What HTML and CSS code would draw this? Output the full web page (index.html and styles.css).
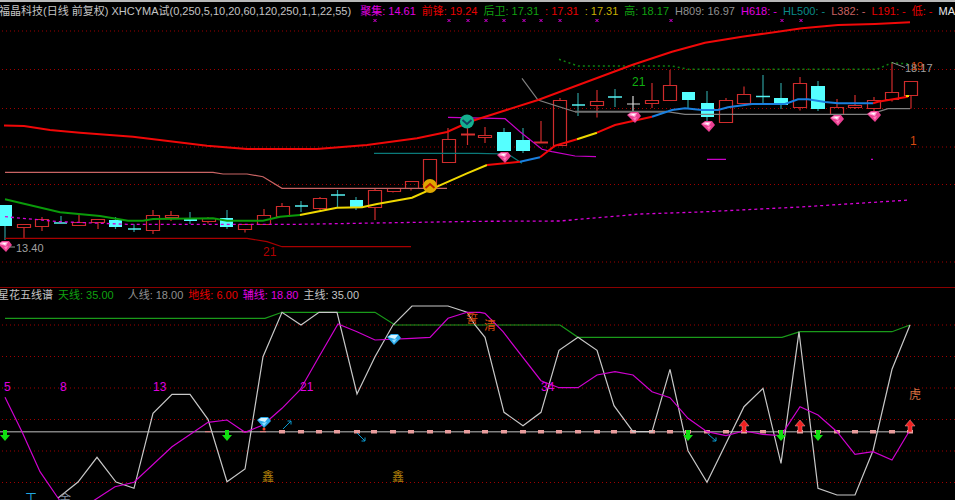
FILE: index.html
```html
<!DOCTYPE html>
<html>
  <head>
    <meta charset="utf-8" />
    <title>福晶科技 日线</title>
    <link rel="stylesheet" href="styles.css">
  </head>

  <body>
    <div class="top-edge"></div>

    <!-- 主图 -->
    <div class="legend legend-main">
      <span class="c-gray title-main">福晶科技(日线 前复权) XHCYMA试(0,250,5,10,20,60,120,250,1,1,22,55)</span>
      <span class="c-magenta">聚集: 14.61</span>
      <span class="c-red">前锋: 19.24</span>
      <span class="c-green">后卫: 17.31</span>
      <span class="c-red">: 17.31</span>
      <span class="c-yellow">: 17.31</span>
      <span class="c-green">高: 18.17</span>
      <span class="c-dim">H809: 16.97</span>
      <span class="c-magenta">H618: -</span>
      <span class="c-teal">HL500: -</span>
      <span class="c-salmon">L382: -</span>
      <span class="c-red">L191: -</span>
      <span class="c-red">低: -</span>
      <span class="c-white ma-tag">MA</span>
    </div>

    <svg class="chart chart-main" viewBox="0 19 955 268" width="955" height="268">
      <defs>
        <g id="gem-pink">
          <path fill="#ea3f92" d="M-7-2-3-5 4-5 7-1 1 6z"/>
          <path fill="#ffa6d4" d="M-6-2-3-4 3-4 1 0z"/>
          <path fill="#fff" d="M-3-3 1-3 0-1z"/>
          <path fill="#ff7ab8" d="M-1 1 3 0 1 4z"/>
        </g>
      </defs>

      <path class="grid" d="M2 31H955M2 69.5H955M2 108.5H955M2 147H955M2 184.5H955M2 262H955"/>

      <!-- 阳线 -->
      <path class="candle-red" d="M17.5 224.5h13v3h-13zM24 227.5v10.5
        M35.5 219.5h13v7h-13zM42 217v2.5M42 226.5v4.5
        M72.5 222.5h13v3h-13zM79 215v7.5
        M91.5 219.5h13v3h-13zM98 222.5v6.5
        M146.5 215.5h13v15h-13zM153 210v5.5M153 230.5v3.5
        M165.5 215.5h13v2h-13zM171 211v4.5M171 217.5v3.5
        M202.5 218.5h13v3h-13zM208 217v2M208 221.5v2
        M238.5 224.5h13v5h-13zM245 229.5v3
        M257.5 215.5h13v9h-13zM264 209v6.5
        M276.5 206.5h13v10h-13zM282 203v3.5
        M313.5 198.5h13v10h-13zM320 197v1.5M320 208.5v1.5
        M368.5 190.5h13v17h-13zM375 189v1.5M375 207.5v12.5
        M387.5 188.5h13v3h-13zM393 191.5v1
        M405.5 181.5h13v7h-13zM411 188.5v2
        M423.5 159.5h13v29h-13z
        M442.5 139.5h13v23h-13zM448 128v11.5
        M467.5 125v20
        M478.5 135.5h13v2h-13zM485 127v8.5M485 137.5v5.5
        M541 121v22
        M553.5 100.5h13v45h-13zM560 98v2.5
        M590.5 101.5h13v4h-13zM597 90v11.5M597 105.5v12
        M645.5 100.5h13v3h-13zM652 83v17.5M652 103.5v4.5
        M663.5 85.5h13v15h-13zM670 70v15.5
        M719.5 100.5h13v22h-13zM726 98v2.5
        M737.5 94.5h13v9h-13zM744 86.5v8
        M793.5 83.5h13v24h-13zM800 77v6.5M800 107.5v3
        M830.5 107.5h13v7h-13zM837 99v8.5
        M848.5 105.5h13v2h-13zM855 95v10.5M855 107.5v1.5
        M867.5 100.5h13v8h-13zM874 97v3.5M874 108.5v3.5
        M885.5 92.5h13v7h-13zM892 62v30.5M892 99.5v2
        M904.5 81.5h13v14h-13zM911 95.5v13"/>
      <path class="doji-red" d="M461 134.5h14M534 142.5h14"/>

      <!-- 阴线 -->
      <path class="wick-teal" d="M5 226v14M61 216v7M115.5 217v12M134 224v8M190 212v12M227 210v19
        M301 201v11M337.5 190v17M356 197v13M504 128v23M523 128v25
        M578 93v23M615 89v18M688 99v9M707 91v31M763 75v30M781 83v26M818 81v30"/>
      <path class="body-cyan" d="M0 205h12v21H0zM109 220h13v7h-13zM184 219h13v2h-13zM220 218h13v9h-13z
        M350 200h13v7h-13zM497 132h14v19h-14zM516 140h14v11h-14zM682 92h13v8h-13z
        M701 103h13v14h-13zM774 98h14v7h-14zM811 86h14v23h-14z"/>
      <path class="doji-cyan" d="M54 223h13M128 229h13M295 206h13M331 195h14M572 105h13M608 97h14M756 96.5h14"/>
      <path class="doji-white" d="M633 96v16M627 104h13"/>

      <!-- 均线 -->
      <polyline class="line-thin c-salmon-line" points="5,172.3 213,172.3 223,174 247,174 263,176.7 282,188.3 447,188.3"/>
      <polyline class="line-thin c-darkred-line" points="5,238.3 247,238.3 267,241.7 282,246.7 411,246.7"/>
      <polyline class="line-thin c-teal-line" points="374,153.3 477,153.3 508,154 522,163.3"/>
      <polyline class="line-thin c-purple-line" points="448,117.3 505,118.7 520,131.7 542,149.3 552,151.7 575,156 596,156.7"/>
      <path class="line-thin c-purple-line" d="M707 159.3H726M871 159.3H873"/>
      <polyline class="line-thin c-gray-line" points="522,78.3 538,100 575,111.7"/>
      <polyline class="line-gray-thick" points="575,111.7 667,111.7"/>
      <polyline class="line-thin c-gray-line" points="667,111.7 685,114.3 870,114.3 888,108.7 910,108.7"/>
      <polyline class="line-dash-green" points="559,59.3 578,66 672,66 688,69.3 877,69.3 892,62.7 908,64"/>
      <polyline class="line-dash-magenta" points="5,216.7 60,221.7 127,224.3 300,224.3 420,222.3 480,221.3 560,221 640,214 700,212 800,207 910,200"/>

      <polyline class="line-bold c-red-line" points="4,125.5 24,126 50,130 80,132.7 133,136.7 207,145.7 247,149 317,149 367,145 417,138.3 447,132 467,123 475,120 538,100 632,65 672,51.7 705,42.7 742,36.7 802,28.3 838,25 875,24 910,22.3"/>
      <polyline class="line-bold c-green-line" points="5,199.3 60,212.3 100,216 128,220.7 143,220.7 153,219 213,218.3 227,220.7 263,220.7 280,216.7 300,215"/>
      <polyline class="line-bold c-yellow-line" points="300,215 337,207.7 362,207.3 377,204 412,197.7 437,186.7 467,173.3 487,165"/>
      <polyline class="line-bold c-red-line" points="487,165 520,161.7"/>
      <polyline class="line-bold c-blue-line" points="520,161.7 540,157.3"/>
      <polyline class="line-bold c-red-line" points="540,157.3 555,145.7 577,139.3"/>
      <polyline class="line-bold c-yellow-line" points="577,139.3 597,132.7"/>
      <polyline class="line-bold c-red-line" points="597,132.7 615,125 652,116.7"/>
      <polyline class="line-bold c-blue-line" points="652,116.7 672,110 685,108.3 702,110 718,110 728,107.3 752,104 785,104 798,99.3 808,99.3 825,102 838,103.3 873,103.3"/>
      <polyline class="line-bold c-red-line" points="873,103.3 878,101.7 908,96.7"/>
      <path class="tip-yellow" d="M906 95h3v2h-3z"/>

      <!-- 信号 -->
      <path class="marks" d="M373.5 19l3 3m0-3l-3 3M447.5 19l3 3m0-3l-3 3M466.5 19l3 3m0-3l-3 3M484.5 19l3 3m0-3l-3 3
        M502.5 19l3 3m0-3l-3 3M522.5 19l3 3m0-3l-3 3M539.5 19l3 3m0-3l-3 3M558.5 19l3 3m0-3l-3 3M595.5 19l3 3m0-3l-3 3
        M669.5 19l3 3m0-3l-3 3M780.5 19l3 3m0-3l-3 3M799.5 19l3 3m0-3l-3 3"/>

      <use href="#gem-pink" x="5" y="246"/>
      <use href="#gem-pink" x="504" y="157"/>
      <use href="#gem-pink" x="634" y="117"/>
      <use href="#gem-pink" x="708" y="126"/>
      <use href="#gem-pink" x="837" y="120"/>
      <use href="#gem-pink" x="874" y="116"/>

      <circle class="dot-teal" cx="467" cy="121.5" r="7"/>
      <path class="chev-teal" d="M462.5 120l4.5 4 4.5-4"/>
      <circle class="dot-gold" cx="430" cy="186" r="7"/>
      <path class="chev-gold" d="M425.5 188l4.5-4 4.5 4"/>

      <path class="leader" d="M9 247h6M892 62.5l13 5"/>
      <text class="c-dim" x="16" y="252">13.40</text>
      <text class="c-green num" x="632" y="86">21</text>
      <text class="c-darkred num" x="263" y="256">21</text>
      <text class="c-orange num" x="910" y="145">1</text>
      <text class="c-dim" x="905" y="72">18.17</text>
      <text class="c-orange" x="911" y="70">19</text>
    </svg>

    <!-- 副图 -->
    <div class="pane-line"></div>
    <div class="legend legend-sub">
      <span class="c-gray title-sub">星花五线谱</span>
      <span class="c-green">天线: 35.00</span>
      <span class="c-dim gap-man">人线: 18.00</span>
      <span class="c-red">地线: 6.00</span>
      <span class="c-magenta">辅线: 18.80</span>
      <span class="c-gray">主线: 35.00</span>
    </div>

    <svg class="chart chart-sub" viewBox="0 303 955 197" width="955" height="197">
      <defs>
        <g id="gem-blue">
          <path fill="#2aa8e8" d="M-7-2-3-5 4-5 7-1 0 6z"/>
          <path fill="#d8f4ff" d="M-6-2-3-4 4-4 1 0z"/>
          <path fill="#8fdcff" d="M-2 1 3 0 0 4z"/>
        </g>
        <path id="arrow-down" d="M-2-6H2V-1H5L0 5-5-1H-2z"/>
        <path id="arrow-up" d="M-2 6H2V0H5L0-6-5 0H-2z"/>
      </defs>

      <path class="grid" d="M2 325H955M2 356.5H955M2 388H955M2 419.5H955M2 451H955M2 482.5H955"/>
      <path class="mid-line" d="M0 431.7H913"/>

      <path class="dash-thin" d="M205 431.7h6M242 431.7h6M260 431.7h6"/>
      <path class="dash-pink" d="M279 430h6v3.5h-6zM298 430h6v3.5h-6zM316 430h6v3.5h-6zM334 430h6v3.5h-6zM354 430h6v3.5h-6zM371 430h6v3.5h-6z
        M390 430h6v3.5h-6zM408 430h6v3.5h-6zM427 430h6v3.5h-6zM445 430h6v3.5h-6zM464 430h6v3.5h-6zM482 430h6v3.5h-6zM501 430h6v3.5h-6z
        M520 430h6v3.5h-6zM538 430h6v3.5h-6zM556 430h6v3.5h-6zM575 430h6v3.5h-6zM594 430h6v3.5h-6zM611 430h6v3.5h-6zM630 430h6v3.5h-6z
        M649 430h6v3.5h-6zM667 430h6v3.5h-6zM685 430h6v3.5h-6zM704 430h6v3.5h-6zM723 430h6v3.5h-6zM741 430h6v3.5h-6zM760 430h6v3.5h-6z
        M778 430h6v3.5h-6zM797 430h6v3.5h-6zM815 430h6v3.5h-6zM834 430h6v3.5h-6zM852 430h6v3.5h-6zM870 430h6v3.5h-6zM889 430h6v3.5h-6zM907 430h6v3.5h-6z"/>

      <polyline class="line-sub c-green-sub" points="5,318.3 265,318.3 282,312.3 375,312.3 395,325 560,325 578,337.3 782,337.3 800,331.7 892,331.7 910,325"/>
      <polyline class="line-sub c-white-sub" points="58,498 78,482 97,457.3 116,482 134,488.3 153,413.3 172,394.3 190,394.3 208,419.3 227,481.7 245,469 263,356.7 282,312.3 301,325 319,312.3 337,312.3 357,394 375,356.7 393,325 412,306 448,306 467,312.3 475,325 485,337.3 504,412.3 523,425.7 541,412.3 559,350.3 578,337.3 597,350.3 614,405.7 633,431.7 652,431.7 670,369.3 688,450.7 707,482.3 744,406.7 763,388.3 781,463.3 799,331.7 818,488.3 837,495 855,495 873,450.7 892,369.3 910,325"/>
      <polyline class="line-sub c-magenta-sub" points="5,397.3 22,431.7 40,471.7 58,498 65,508"/>
      <polyline class="line-sub c-magenta-sub" points="90,503 115,486.7 134,482.3 172,446.7 208,422.3 227,420 245,432.3 263,425 282,408.3 300,390 319,356.7 338,324 357,331.7 375,340 412,338.3 430,337.3 448,318.3 467,312.3 480,312.3 485,313.3 503,331.7 541,380.7 559,387.7 578,387.7 597,375 615,371.7 633,375 652,391.7 670,397.7 688,418.3 707,431.7 726,435.7 744,431 763,434.3 781,435.7 800,406.7 818,415 837,431.7 855,454.3 873,451.7 892,460 910,430"/>

      <use class="arrow-green" href="#arrow-down" x="5" y="436"/>
      <use class="arrow-green" href="#arrow-down" x="227" y="436"/>
      <use class="arrow-green" href="#arrow-down" x="688" y="436"/>
      <use class="arrow-green" href="#arrow-down" x="781" y="436"/>
      <use class="arrow-green" href="#arrow-down" x="818" y="436"/>
      <use class="arrow-red" href="#arrow-up" x="744" y="426"/>
      <use class="arrow-red" href="#arrow-up" x="800" y="426"/>
      <use class="arrow-red" href="#arrow-up" x="910" y="426"/>

      <path class="arrow-small" d="M283 429l8-8m-3.500 0h3.500v3.500M357 433l8 8m-3.500 0h3.500v-3.500M708 434l8 7m-3.500 0h3.500v-3.500"/>

      <use href="#gem-blue" x="264" y="422"/>
      <use href="#gem-blue" x="394" y="339"/>
      <circle class="dot-red" cx="264" cy="429" r="1.500"/>

      <text class="c-magenta num" x="4" y="391">5</text>
      <text class="c-magenta num" x="60" y="391">8</text>
      <text class="c-magenta num" x="153" y="391">13</text>
      <text class="c-magenta num" x="300" y="391">21</text>
      <text class="c-magenta num" x="541" y="391">34</text>
      <text class="c-gold sign" x="262" y="481">鑫</text>
      <text class="c-gold sign" x="392" y="481">鑫</text>
      <text class="c-orange sign" x="466" y="323">誓</text>
      <text class="c-orange sign" x="484" y="330">清</text>
      <text class="c-peach sign" x="909" y="399">虎</text>
      <text class="c-cyan sign" x="25" y="503">工</text>
      <text class="c-steel sign" x="59" y="503">金</text>
    </svg>
  </body>
</html>
```

FILE: styles.css
```css
* {
  margin: 0;
  padding: 0;
}
body {
  width: 955px;
  height: 500px;
  overflow: hidden;
  background: #000;
  font-family: "Liberation Sans", "Noto Sans CJK SC", sans-serif;
  font-size: 11px;
}
.top-edge {
  height: 2px;
  background: #b8b8b8;
}
.chart {
  display: block;
}
.chart text {
  font-size: 11px;
}
.chart .num {
  font-size: 12px;
}
.chart .sign {
  font-size: 12px;
}
.pane-line {
  height: 1px;
  background: #8a0000;
}
.legend {
  display: flex;
  white-space: nowrap;
  overflow: hidden;
}
.legend-main {
  height: 16px;
  padding-top: 1px;
  line-height: 16px;
  gap: 6px;
}
.legend-sub {
  height: 15px;
  line-height: 15px;
  gap: 5px;
}
.title-main {
  margin-left: -1px;
  margin-right: 3px;
}
.title-sub {
  margin-left: -2px;
}
.gap-man {
  margin-left: 9px;
}
.ma-tag {
  margin-left: auto;
  margin-right: 5px;
}

.c-gray { color: #c4c4c4; fill: #c4c4c4; }
.c-dim { color: #909090; fill: #a0a0a0; }
.c-white { color: #e8e8e8; }
.c-magenta { color: #e000e0; fill: #e000e0; }
.c-red { color: #e80000; }
.c-green { color: #10a010; fill: #10b010; }
.c-yellow { color: #c8b000; }
.c-teal { color: #0a8a8a; }
.c-salmon { color: #c86060; }
.c-darkred { fill: #b00000; }
.c-orange { fill: #d84a10; }
.c-peach { fill: #d87040; }
.c-gold { fill: #b8860b; }
.c-cyan { fill: #20a8e0; }
.c-steel { fill: #8090a0; }

.grid {
  fill: none;
  stroke: #a00000;
  stroke-width: 1;
  stroke-dasharray: 1 3;
}
.candle-red {
  fill: none;
  stroke: #cf2c2c;
  stroke-width: 1.2;
}
.doji-red {
  fill: none;
  stroke: #d83030;
  stroke-width: 2;
}
.wick-teal {
  fill: none;
  stroke: #2c9a9a;
  stroke-width: 1.2;
}
.body-cyan {
  fill: #55ffff;
}
.doji-cyan {
  fill: none;
  stroke: #55f0f0;
  stroke-width: 1.5;
}
.doji-white {
  fill: none;
  stroke: #d8d8d8;
  stroke-width: 1.2;
}

polyline {
  fill: none;
}
.line-thin {
  fill: none;
  stroke-width: 1.2;
}
.line-bold {
  stroke-width: 2;
}
.c-salmon-line { stroke: #c86464; }
.c-darkred-line { stroke: #a80000; }
.c-teal-line { stroke: #0a7a7a; }
.c-purple-line { stroke: #c800c8; }
.c-gray-line { stroke: #808080; }
.c-red-line { stroke: #f00808; }
.c-green-line { stroke: #0a9a0a; }
.c-yellow-line { stroke: #f0d800; }
.c-blue-line { stroke: #1a80e0; }
.line-gray-thick {
  stroke: #707070;
  stroke-width: 2;
}
.line-dash-green {
  stroke: #108010;
  stroke-width: 1.5;
  stroke-dasharray: 2 3;
}
.line-dash-magenta {
  stroke: #d800d8;
  stroke-width: 1.3;
  stroke-dasharray: 3 3;
}
.tip-yellow {
  fill: #f0d800;
}
.marks {
  fill: none;
  stroke: #e000e0;
  stroke-width: 1;
}
.dot-teal {
  fill: #14b090;
}
.chev-teal {
  fill: none;
  stroke: #104060;
  stroke-width: 1.8;
}
.dot-gold {
  fill: #e0a800;
}
.chev-gold {
  fill: none;
  stroke: #c02000;
  stroke-width: 1.8;
}
.leader {
  fill: none;
  stroke: #909090;
  stroke-width: 1;
}

.mid-line {
  stroke: #808080;
  stroke-width: 1.5;
}
.dash-thin {
  stroke: #d88080;
  stroke-width: 1.2;
}
.dash-pink {
  fill: #e89c9c;
}
.line-sub {
  stroke-width: 1.2;
}
.c-green-sub { stroke: #1a9a1a; }
.c-white-sub { stroke: #c8c8c8; }
.c-magenta-sub { stroke: #d000d0; }
.arrow-green {
  fill: #10e010;
}
.arrow-red {
  fill: #f02020;
  stroke: #f0a0a0;
  stroke-width: 0.5;
}
.arrow-small {
  fill: none;
  stroke: #0a9ad0;
  stroke-width: 1;
}
.dot-red {
  fill: #f04020;
}
```
